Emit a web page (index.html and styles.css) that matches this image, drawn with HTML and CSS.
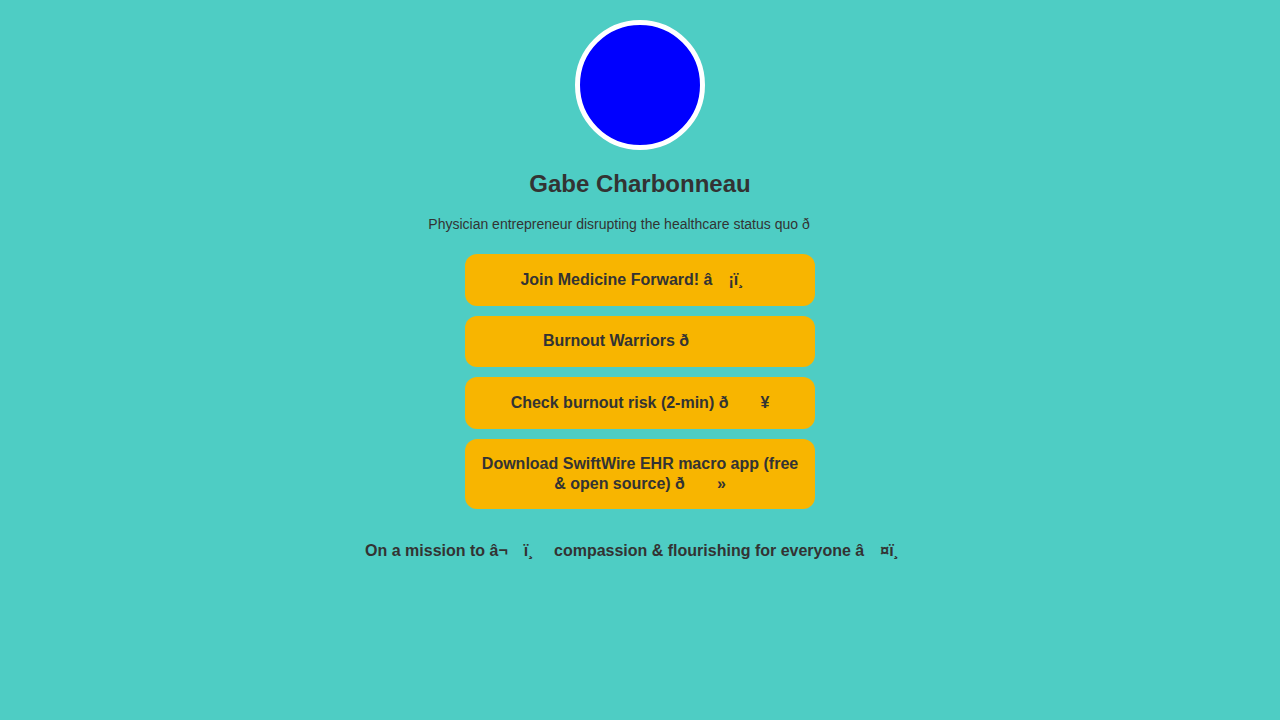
FILE: index.html
```html
<!DOCTYPE html>
<html lang="en">
<head>
<meta charset="utf-8">
<title>Gabe Charbonneau</title>
<link rel="stylesheet" href="styles.css">
</head>
<body>
<main class="page">
  <div class="avatar"></div>
  <h1 class="name">Gabe Charbonneau</h1>
  <p class="bio">Physician entrepreneur disrupting the healthcare status quo ð<span class="cc"></span><span class="cc"></span><span class="cc"></span></p>
  <nav class="links">
    <a class="link" href="#"><span class="label">Join Medicine Forward! â<span class="cc"></span>¡ï¸<span class="cc"></span></span></a>
    <a class="link" href="#"><span class="label">Burnout Warriors ð<span class="cc"></span><span class="cc"></span><span class="cc"></span></span></a>
    <a class="link" href="#"><span class="label">Check burnout risk (2-min) ð<span class="cc"></span><span class="cc"></span>¥</span></a>
    <a class="link" href="#"><span class="label">Download SwiftWire EHR macro app (free &amp; open source) ð<span class="cc"></span><span class="cc"></span>»</span></a>
  </nav>
  <p class="mission">On a mission to â¬<span class="cc"></span>ï¸<span class="cc"></span> compassion &amp; flourishing for everyone â<span class="cc"></span>¤ï¸<span class="cc"></span></p>
</main>
</body>
</html>
```
FILE: styles.css
```css
html, body {
  margin: 0;
  padding: 0;
}
body {
  background: #4ecdc4;
  color: #333333;
  font-family: "Liberation Sans", Arial, Helvetica, sans-serif;
  min-height: 720px;
}
.page {
  display: flex;
  flex-direction: column;
  align-items: center;
  padding-top: 20px;
  text-align: center;
}
.avatar {
  width: 120px;
  height: 120px;
  border-radius: 50%;
  background: #0000ff;
  border: 5px solid #ffffff;
}
.name {
  margin: 20px 0 0;
  font-size: 24px;
  font-weight: bold;
  line-height: 28px;
}
.bio {
  margin: 18px 0 0;
  font-size: 14px;
  line-height: 16px;
}
.cc {
  display: inline-block;
  width: 1em;
}
.links {
  margin-top: 22px;
  width: 350px;
  display: flex;
  flex-direction: column;
  gap: 10px;
}
.link {
  box-sizing: border-box;
  min-height: 51.5px;
  display: flex;
  align-items: center;
  justify-content: center;
  background: #f8b500;
  color: #333333;
  text-decoration: none;
  font-size: 16px;
  font-weight: bold;
  line-height: 20px;
  padding: 15px 15px;
  border-radius: 12px;
}
.label {
  display: block;
  text-align: center;
}
.mission {
  margin: 33px 0 0;
  font-size: 16px;
  font-weight: bold;
  line-height: 18px;
}
```
